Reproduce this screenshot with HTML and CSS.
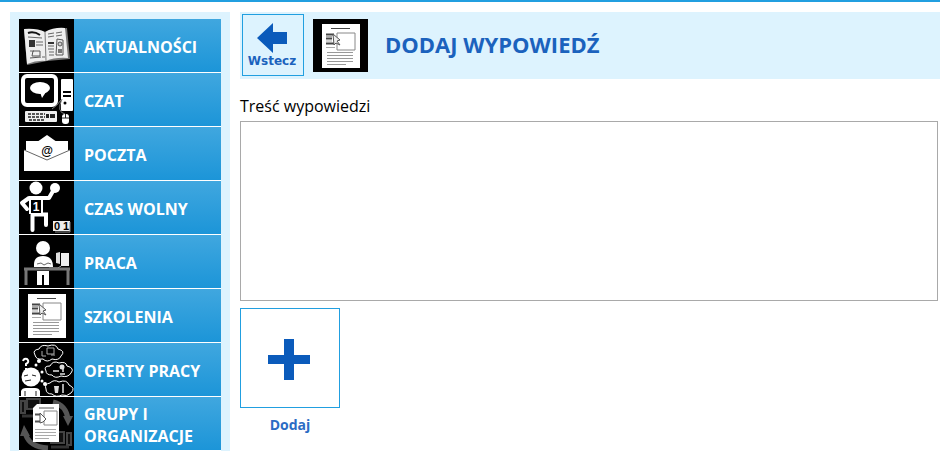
FILE: index.html
```
<!DOCTYPE html>
<html lang="pl">
<head>
  <meta charset="UTF-8">
  <title>Dodaj wypowiedź</title>
  <meta name="viewport" content="width=device-width, initial-scale=1.0">
  <link rel="stylesheet" href="styles.css">
</head>
<body>

  <!-- Ikona dokumentu używana w menu i w nagłówku -->
  <svg class="sprite" aria-hidden="true">
    <symbol id="doc" viewBox="0 0 55 53">
      <path d="M9 5h38v44H9z" fill="#fff"/>
      <path d="M18 9.500h19" stroke="#444"/>
      <path d="M24 14h18v17H24z" fill="none" stroke="#888"/>
      <path d="M13 15.500h8M13 19.500h6M13 24.500h9" stroke="#444" stroke-width="2"/>
      <path d="M13 17.500h6M13 22h6M13 28.500h9" stroke="#aaa"/>
      <path d="M20 15l7 6-3 1 3 4-4-2-2 2z" fill="#eee" stroke="#555"/>
      <path d="M14 33.500h26M14 36.500h26M14 39.500h26M14 42.500h26M14 45.500h19" stroke="#999"/>
    </symbol>
  </svg>

  <div class="page">
    <nav class="menu">
      <a href="#">
        <svg class="icon" viewBox="0 0 55 53" aria-hidden="true">
          <path d="M5 11L26 13 48 9 51 40 28 42 8 46z" fill="#777"/>
          <path d="M5 10q13-1 21 3 9-5 20-4l3 30q-13-1-22 3-9-1-19 3z" fill="#eee"/>
          <path d="M26 13l1 29" stroke="#777"/>
          <path d="M9 14q6-2 12 2" fill="none" stroke="#111" stroke-width="2"/>
          <path d="M9 18l14 1M17 23h7M17 26h7M11 32h4M23 38h3M29 15l6-1M37 14l6-1M29 18l6-1M37 17l6-1M29 27h6M29 30h6M30 33h5M30 36h5" stroke="#666"/>
          <path d="M11 22h4v5h-4zM29 24h6" fill="#333" stroke="#333" stroke-width="2"/>
          <path d="M14 32h7v5h-8zM11 39l11-1M38 20l6 1v15h-7z" fill="none" stroke="#555"/>
          <circle cx="41" cy="25" r="2" fill="#ccc" stroke="#555"/>
          <path d="M39 34v-4h4v4" fill="#777"/>
        </svg>
        <span>AKTUALNOŚCI</span>
      </a>
      <a href="#">
        <svg class="icon" viewBox="0 0 55 53" aria-hidden="true">
          <rect x="4" y="3" width="33" height="29" rx="4" fill="#000" stroke="#fff" stroke-width="4"/>
          <ellipse cx="21" cy="15" rx="10" ry="6" fill="#fff"/>
          <path d="M21 19h6l-4 6z" fill="#fff"/>
          <rect x="42" y="6" width="12" height="32" rx="1" fill="#fff"/>
          <path d="M44 19h8M44 23h8" stroke="#000" stroke-width="2"/>
          <circle cx="46" cy="30" r="1.500"/>
          <path d="M42 27q-4 6-9 9M43 26q-6 13 3 15" fill="none" stroke="#777"/>
          <rect x="6" y="38" width="32" height="11" rx="1" fill="#eee"/>
          <path d="M9 41h17M9 44h17M10 47h15" stroke="#555" stroke-width="2" stroke-dasharray="3 1"/>
          <path d="M27 43h3M31 43h5" stroke="#222" stroke-width="4"/>
          <rect x="43" y="41" width="7" height="10" rx="3" fill="#fff"/>
          <path d="M43 45h7M46.500 41v4" stroke="#222"/>
        </svg>
        <span>CZAT</span>
      </a>
      <a href="#">
        <svg class="icon" viewBox="0 0 55 53" aria-hidden="true">
          <path d="M18 15l10-7 10 7z" fill="#fff"/>
          <path d="M5 23h46v21H5z" fill="#fff"/>
          <path d="M7 14h42v11L28 33 7 25z" fill="#fff"/>
          <path d="M5 23l23 10 23-10" fill="none" stroke="#666"/>
          <text class="at" x="28" y="28">@</text>
        </svg>
        <span>POCZTA</span>
      </a>
      <a href="#">
        <svg class="icon" viewBox="0 0 55 53" aria-hidden="true">
          <circle cx="17" cy="7" r="6.500" fill="#fff"/>
          <circle cx="36" cy="7" r="5" fill="#fff"/>
          <path d="M10 17L3 22l5 6M10 17h20l4-7" fill="none" stroke="#fff" stroke-width="4" stroke-linecap="round" stroke-linejoin="round"/>
          <path d="M10 15h14v18H10z" fill="#fff"/>
          <path d="M13.500 34v15M13.500 33.500H27V44" fill="none" stroke="#fff" stroke-width="4" stroke-linecap="round"/>
          <path d="M12 19h10v13H12z"/>
          <text class="shirt" x="17" y="30">1</text>
          <path d="M34 40h17v10H34z" fill="#eee"/>
          <path d="M51 41v10H36" fill="none" stroke="#888"/>
          <text class="score" x="35" y="49">0</text>
          <text class="score" x="44" y="49">1</text>
        </svg>
        <span>CZAS WOLNY</span>
      </a>
      <a href="#">
        <svg class="icon" viewBox="0 0 55 53" aria-hidden="true">
          <circle cx="24" cy="13" r="7" fill="#fff"/>
          <path d="M15 32q-1-11 9-11t10 11z" fill="#fff"/>
          <path d="M18 29l4-1 3 2 4-2 3 1" fill="none" stroke="#666"/>
          <path d="M37 18l4-1v12l-4-1z" fill="#ddd"/>
          <path d="M42 18h8v13h-8z" fill="#eee"/>
          <path d="M30 33h9l3-2" stroke="#bbb" fill="none"/>
          <path d="M5 34h46M7 34v16M49 34v16" fill="none" stroke="#777" stroke-width="3"/>
          <path d="M18 36h12v14h-5V40h-2v10h-5z" fill="#fff"/>
        </svg>
        <span>PRACA</span>
      </a>
      <a href="#">
        <svg class="icon" aria-hidden="true"><use href="#doc"/></svg>
        <span>SZKOLENIA</span>
      </a>
      <a href="#">
        <svg class="icon" viewBox="0 0 55 53" aria-hidden="true">
          <circle cx="12" cy="34" r="9.500" fill="#fff"/>
          <path d="M2 53v-5q1-3 5-3h9q4 0 5 3v5z" fill="#fff"/>
          <path d="M6 48v5M17 48v5M6 38l6-1M5 33l4-1M13 32l4 1" stroke="#222"/>
          <path d="M4 18q1-3 4-2 3 3-1 5v2M7 25v2" fill="none" stroke="#fff" stroke-width="2"/>
          <g fill="#000" stroke="#fff">
            <path d="M16 12q-3-5 4-6 2-5 9-3 8-3 10 3 8 2 3 7-2 5-9 3-5 4-9 0-7 1-8-4z"/>
            <path d="M27 28q-3-5 4-5 3-6 9-3 7-2 8 3 8 2 4 7-3 5-10 3-6 3-9-1-6 0-6-4z"/>
            <path d="M27 46q-2-5 4-6 4-4 9-1 8-3 10 3 7 3 2 8-4 4-9 2-6 3-10-1-6 0-6-5z"/>
          </g>
          <path d="M28 5h7v6h-7zM23 8v5h4M32 12h4" fill="none" stroke="#aaa"/>
          <path d="M34 28h6M44 22v7M41 31h5" stroke="#aaa" stroke-width="2"/>
          <circle cx="43" cy="24" r="2.500" fill="#ddd"/>
          <path d="M35 43h5l-1 7h-3z" fill="#ddd"/>
          <path d="M44 41v9" stroke="#aaa" stroke-width="2"/>
          <g fill="#fff"><circle cx="17" cy="22" r="1.500"/><circle cx="20" cy="18" r="2"/><circle cx="23" cy="29" r="1.500"/><circle cx="23" cy="38" r="1.500"/><circle cx="26" cy="41" r="2"/></g>
        </svg>
        <span>OFERTY PRACY</span>
      </a>
      <a href="#">
        <svg class="icon" viewBox="0 0 55 53" aria-hidden="true">
          <path d="M2 4h4v12H2zM8 2h13v10H8zM32 35h13v11H32zM48 36h4v12h-4z" fill="#111" stroke="#444" stroke-width="2"/>
          <path d="M3 19h14M32 50h18" stroke="#333" stroke-width="3"/>
          <path d="M34 5q13 3 15 17" fill="none" stroke="#555" stroke-width="5"/>
          <path d="M44 19h10l-5 10z" fill="#555"/>
          <path d="M29 51Q9 50 6 35" fill="none" stroke="#555" stroke-width="5"/>
          <path d="M1 39h10L5 28z" fill="#555"/>
          <path d="M18 7h22v38H14V11z" fill="#fff"/>
          <path d="M20 11h15" stroke="#555"/>
          <path d="M25 14h13v14H25z" fill="none" stroke="#888"/>
          <path d="M16 17.500h5M16 24.500h5" stroke="#555" stroke-width="2"/>
          <path d="M21 16l6 6-3 3-3 1z" fill="#fff" stroke="#555"/>
          <path d="M16 32.500h21M16 35.500h21M16 38.500h21M16 41.500h14" stroke="#aaa"/>
        </svg>
        <span>GRUPY I ORGANIZACJE</span>
      </a>
    </nav>

    <main>
      <header class="title-bar">
        <button type="button" class="back">
          <svg viewBox="0 0 30 30" aria-hidden="true"><path d="M0 15L16 0v9h14v12H16v9z" fill="#0b5bbb"/></svg>
          Wstecz
        </button>
        <svg class="icon" aria-hidden="true"><use href="#doc"/></svg>
        <h1>DODAJ WYPOWIEDŹ</h1>
      </header>

      <form>
        <label for="content">Treść wypowiedzi</label>
        <textarea id="content" name="content"></textarea>
        <button type="submit" class="add">
          <span class="add-box">
            <svg viewBox="0 0 42 42" aria-hidden="true"><path d="M16 0h10v16h16v9H26v16H16V25H0v-9h16z" fill="#0b5bbb"/></svg>
          </span>
          Dodaj
        </button>
      </form>
    </main>
  </div>

</body>
</html>
```
FILE: styles.css
```
* { box-sizing: border-box; }
body { margin: 0 5px 0 0; border-top: 2px solid #219fe0; font-family: "Open Sans", "Noto Sans", sans-serif; font-size: 16px; background: #fff; color: #000; }
.sprite { display: none; }
.page { display: flex; gap: 10px; padding: 10px 0 0 10px; height: calc(100vh - 2px); overflow: hidden; }

.menu { flex: none; width: 220px; padding: 7px 9px; background: #ddf3fe; }
.menu a { display: flex; align-items: center; height: 53px; margin-bottom: 1px; background: linear-gradient(#40a7df, #1c95d8); box-shadow: 0 1px #fff; color: #fff; font-weight: bold; line-height: 22px; text-decoration: none; }
.menu span { padding: 2px 10px 0; }
.icon { flex: none; width: 55px; height: 53px; background: #000; }

.at, .shirt, .score { font-family: "Liberation Sans", Arial, sans-serif; }
.at { font-size: 12px; text-anchor: middle; }
.shirt { font-size: 12px; font-weight: bold; text-anchor: middle; fill: #fff; }
.score { font-size: 11px; }

main { flex: 1; min-width: 0; }
.title-bar { display: flex; align-items: center; height: 67px; padding: 0 2px; background: #ddf3fe; }
.title-bar h1 { margin: 0 0 0 17px; padding-bottom: 4px; font-size: 22px; line-height: 30px; color: #1b62bd; }
.back { display: flex; flex-direction: column; align-items: center; width: 62px; height: 62px; margin: 0 9px 1px 0; padding: 8px 2px 0 0; border: 1px solid #219fe0; background: none; color: #1b62bd; font-family: "DejaVu Sans", Verdana, sans-serif; font-size: 12px; font-weight: bold; line-height: 16px; cursor: pointer; }
.back svg { width: 30px; height: 30px; }

form { padding: 16px 2px 0 0; }
label { display: block; line-height: 22px; }
textarea { display: block; width: 100%; height: 180px; margin: 4px 0 7px; padding: 4px; border: 1px solid #a9a9a9; font: inherit; resize: none; }
.add { display: block; padding: 0; border: 0; background: none; color: #2b6cc4; font: bold 14px/20px "Open Sans", "Noto Sans", sans-serif; cursor: pointer; }
.add-box { display: flex; align-items: center; justify-content: center; width: 100px; height: 100px; margin-bottom: 7px; padding: 4px 2px 0 0; border: 1px solid #219fe0; }
.add svg { width: 42px; height: 42px; }
```
